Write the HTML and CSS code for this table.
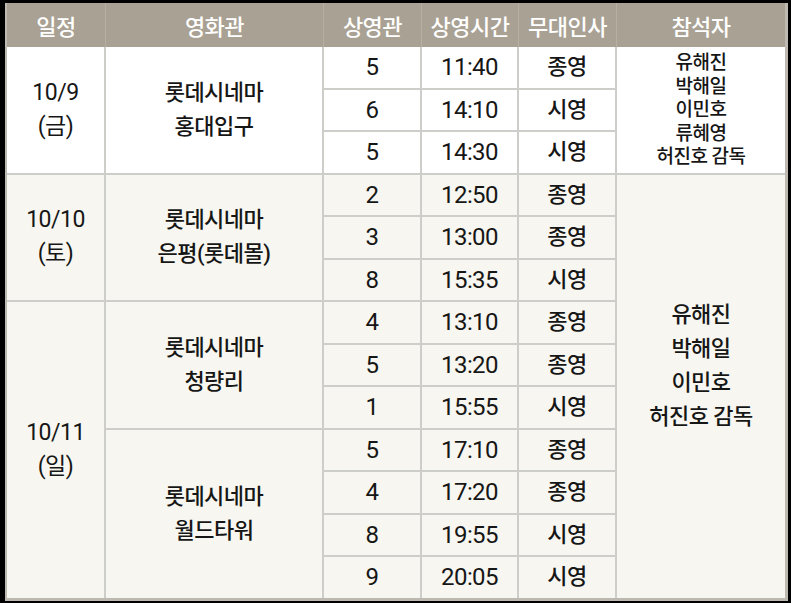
FILE: index.html
```html
<!DOCTYPE html>
<html lang="ko">
<head>
<meta charset="utf-8">
<title>무대인사 일정</title>
<link rel="stylesheet" href="styles.css">
</head>
<body>
<table class="schedule">
  <colgroup>
    <col class="c-date"><col class="c-theater"><col class="c-hall"><col class="c-time"><col class="c-type"><col class="c-guests">
  </colgroup>
  <thead>
    <tr><th>일정</th><th>영화관</th><th>상영관</th><th>상영시간</th><th>무대인사</th><th>참석자</th></tr>
  </thead>
  <tbody class="g-white">
    <tr><td rowspan="3" class="date">10/9<br>(금)</td><td rowspan="3">롯데시네마<br>홍대입구</td><td class="num">5</td><td class="num">11:40</td><td>종영</td><td rowspan="3" class="guests-small">유해진<br>박해일<br>이민호<br>류혜영<br>허진호 감독</td></tr>
    <tr><td class="num">6</td><td class="num">14:10</td><td>시영</td></tr>
    <tr><td class="num">5</td><td class="num">14:30</td><td>시영</td></tr>
  </tbody>
  <tbody class="g-cream">
    <tr><td rowspan="3" class="date">10/10<br>(토)</td><td rowspan="3">롯데시네마<br>은평(롯데몰)</td><td class="num">2</td><td class="num">12:50</td><td>종영</td><td rowspan="10" class="guests-big">유해진<br>박해일<br>이민호<br>허진호 감독</td></tr>
    <tr><td class="num">3</td><td class="num">13:00</td><td>종영</td></tr>
    <tr><td class="num">8</td><td class="num">15:35</td><td>시영</td></tr>
    <tr><td rowspan="7" class="date">10/11<br>(일)</td><td rowspan="3">롯데시네마<br>청량리</td><td class="num">4</td><td class="num">13:10</td><td>종영</td></tr>
    <tr><td class="num">5</td><td class="num">13:20</td><td>종영</td></tr>
    <tr><td class="num">1</td><td class="num">15:55</td><td>시영</td></tr>
    <tr><td rowspan="4">롯데시네마<br>월드타워</td><td class="num">5</td><td class="num">17:10</td><td>종영</td></tr>
    <tr><td class="num">4</td><td class="num">17:20</td><td>종영</td></tr>
    <tr><td class="num">8</td><td class="num">19:55</td><td>시영</td></tr>
    <tr class="last"><td class="num">9</td><td class="num">20:05</td><td>시영</td></tr>
  </tbody>
</table>
</body>
</html>
```
FILE: styles.css
```css
html, body {
  margin: 0;
  padding: 0;
  background: #000;
}
body {
  padding: 3px 6px 5px 5px;
  font-family: Roboto, "Noto Sans CJK KR", sans-serif;
}
.schedule {
  width: 780px;
  table-layout: fixed;
  border-collapse: separate;
  border-spacing: 0;
  border-left: 2px solid #bdb9b1;
  border-right: 3px solid #bdb9b1;
  border-bottom: 3px solid #bdb9b1;
  color: #161616;
}
.c-date { width: 99px; }
.c-theater { width: 218px; }
.c-hall { width: 98px; }
.c-time { width: 97px; }
.c-type { width: 98px; }
.c-guests { width: 168px; }

.schedule th {
  background: #a9a193;
  color: #fff;
  font-weight: 500;
  font-size: 22px;
  height: 44px;
  padding: 0;
  border-right: 1px solid #b7afa3;
  letter-spacing: -0.5px;
}
.schedule th:last-child { border-right: none; }

.schedule td {
  height: 40.5px;
  padding: 0;
  text-align: center;
  vertical-align: middle;
  font-size: 22px;
  font-weight: 500;
  line-height: 34px;
  border-right: 2px solid #cdcdc9;
  border-bottom: 2px solid #cdcdc9;
  letter-spacing: -0.5px;
}
.schedule td.date {
  font-size: 23px;
  font-weight: 400;
}
.schedule td.num {
  font-size: 24px;
  font-weight: 400;
  letter-spacing: -0.6px;
}
.schedule td.guests-small,
.schedule td.guests-big { border-right: none; }
.schedule td.guests-small {
  font-size: 19px;
  line-height: 23.5px;
}
.schedule td.guests-big {
  padding-bottom: 40px;
}
.g-white td { background: #fff; }
.g-cream td { background: #f7f6f0; }
.schedule tr.last td,
.g-cream td.guests-big,
.g-cream tr:nth-child(4) td:first-child,
.g-cream tr:nth-child(7) td:first-child { border-bottom: none; }
```
